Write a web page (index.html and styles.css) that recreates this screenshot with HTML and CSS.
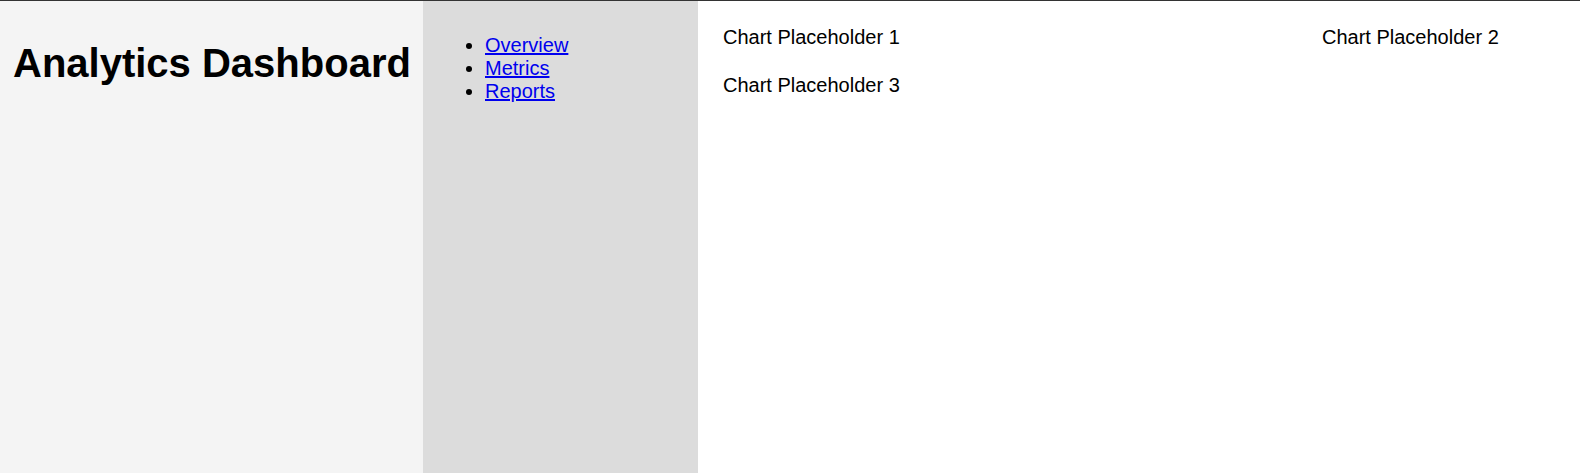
FILE: index.html
```html
<!DOCTYPE html>
<html lang="en">
<head>
<meta charset="utf-8">
<title>Analytics Dashboard</title>
<link rel="stylesheet" href="styles.css">
</head>
<body>
<div class="layout">
  <header class="header">
    <h1 class="title">Analytics Dashboard</h1>
  </header>
  <nav class="nav">
    <ul class="nav-list">
      <li><a href="#">Overview</a></li>
      <li><a href="#">Metrics</a></li>
      <li><a href="#">Reports</a></li>
    </ul>
  </nav>
  <main class="main">
    <div class="chart">Chart Placeholder 1</div>
    <div class="chart">Chart Placeholder 2</div>
    <div class="chart">Chart Placeholder 3</div>
  </main>
</div>
</body>
</html>
```
FILE: styles.css
```css
html, body {
  margin: 0;
  padding: 0;
}
body {
  font-family: "Liberation Sans", Arial, sans-serif;
  font-size: 20px;
  color: #000;
  background: #fff;
  border-top: 1px solid #333;
}
.layout {
  display: grid;
  grid-template-columns: 423px 275px 1fr;
  height: calc(100vh - 1px);
}
.header {
  background: #f4f4f4;
  padding: 13px 12px 10px 13px;
}
.title {
  font-size: 2em;
  font-weight: bold;
  margin: 0.67em 0;
}
.nav {
  background: #dcdcdc;
  padding: 13px 12px 12px 22px;
}
.nav-list {
  margin: 20px 0;
  padding-left: 40px;
}
.nav-list a {
  color: #0000ee;
  text-decoration: underline;
}
.main {
  padding: 15px;
  display: grid;
  grid-template-columns: 599px 1fr;
  grid-auto-rows: min-content;
  row-gap: 5px;
  align-content: start;
}
.chart {
  padding: 10px;
}
```
